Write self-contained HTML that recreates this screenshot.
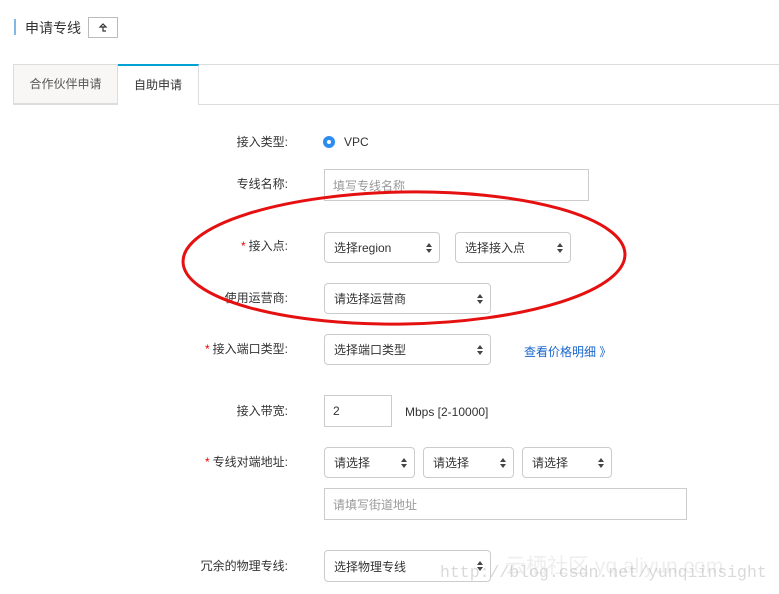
<!DOCTYPE html><html><head><meta charset="utf-8"><style>
body{margin:0;width:779px;height:594px;background:#fff;position:relative;overflow:hidden;font-family:"Liberation Sans","Noto Sans CJK SC",sans-serif;font-size:12px;color:#333}
.a{position:absolute}
.lb{position:absolute;right:491px;text-align:right;white-space:nowrap;line-height:14px}
.lb b{color:#e00;font-weight:normal;margin-right:3px}
.s{position:absolute;border:1px solid #ccc;border-radius:4px;box-sizing:border-box;padding-left:9px;font-size:12px;display:flex;align-items:center;background:#fff}
.s:after{content:"";position:absolute;right:7px;top:50%;margin-top:-5px;width:0;height:0;border-left:3px solid transparent;border-right:3px solid transparent;border-bottom:4px solid #444}
.s:before{content:"";position:absolute;right:7px;top:50%;margin-top:1px;width:0;height:0;border-left:3px solid transparent;border-right:3px solid transparent;border-top:4px solid #444}
.i{position:absolute;border:1px solid #ccc;box-sizing:border-box;padding-left:8px;display:flex;align-items:center;color:#999}
</style></head><body>
<div class="a" style="left:14px;top:19px;width:2px;height:16px;background:#7fb8e4"></div>
<div class="a" style="left:25px;top:18px;font-size:14px;color:#333">申请专线</div>
<div class="a" style="left:88px;top:17px;width:30px;height:21px;border:1px solid #bbb;box-sizing:border-box"></div>
<svg class="a" style="left:98px;top:23px" width="10" height="10"><path d="M5 1L2 4H8Z M5 4V8H8" fill="none" stroke="#333" stroke-width="1.2"/></svg>
<div class="a" style="left:199px;top:64px;width:580px;height:1px;background:#ddd"></div>
<div class="a" style="left:13px;top:104px;width:766px;height:1px;background:#ddd"></div>
<div class="a" style="left:13px;top:64px;width:105px;height:40px;background:#f8f7f6;border:1px solid #ddd;box-sizing:border-box;text-align:center;line-height:38px;color:#555">合作伙伴申请</div>
<div class="a" style="left:118px;top:64px;width:81px;height:41px;background:#fff;border-right:1px solid #ddd;border-top:2px solid #00a2d4;box-sizing:border-box;text-align:center;line-height:38px">自助申请</div>
<div class="lb" style="top:135px">接入类型:</div>
<div class="a" style="left:323px;top:136px;width:12px;height:12px;border-radius:50%;background:#2d8cf0"></div>
<div class="a" style="left:327px;top:140px;width:4px;height:4px;border-radius:50%;background:#fff"></div>
<div class="a" style="left:344px;top:135px">VPC</div>
<div class="lb" style="top:177px">专线名称:</div>
<div class="i" style="left:324px;top:169px;width:265px;height:32px">填写专线名称</div>
<div class="lb" style="top:239px"><b>*</b>接入点:</div>
<div class="s" style="left:324px;top:232px;width:116px;height:31px">选择region</div>
<div class="s" style="left:455px;top:232px;width:116px;height:31px">选择接入点</div>
<div class="lb" style="top:291px">使用运营商:</div>
<div class="s" style="left:324px;top:283px;width:167px;height:31px">请选择运营商</div>
<div class="lb" style="top:342px"><b>*</b>接入端口类型:</div>
<div class="s" style="left:324px;top:334px;width:167px;height:31px">选择端口类型</div>
<div class="a" style="left:524px;top:343px;color:#1a66cc">查看价格明细 》</div>
<div class="lb" style="top:404px">接入带宽:</div>
<div class="i" style="left:324px;top:395px;width:68px;height:32px;color:#333">2</div>
<div class="a" style="left:405px;top:405px">Mbps [2-10000]</div>
<div class="lb" style="top:455px"><b>*</b>专线对端地址:</div>
<div class="s" style="left:324px;top:447px;width:91px;height:31px">请选择</div>
<div class="s" style="left:423px;top:447px;width:91px;height:31px">请选择</div>
<div class="s" style="left:522px;top:447px;width:90px;height:31px">请选择</div>
<div class="i" style="left:324px;top:488px;width:363px;height:32px">请填写街道地址</div>
<div class="lb" style="top:559px">冗余的物理专线:</div>
<div class="s" style="left:324px;top:550px;width:167px;height:32px">选择物理专线</div>
<div class="a" style="left:505px;top:550px;font-size:21px;color:rgba(200,200,200,.3);white-space:nowrap">云栖社区 yq.aliyun.com</div>
<div class="a" style="left:440px;top:563px;font-family:'Liberation Mono',monospace;font-size:16.5px;color:rgba(160,160,160,.4);white-space:nowrap">http://blog.csdn.net/yunqiinsight</div>
<svg class="a" style="left:0;top:0" width="779" height="594"><ellipse cx="404" cy="258" rx="221" ry="66" transform="rotate(-1 404 258)" fill="none" stroke="#e51010" stroke-width="3"/></svg>
</body></html>
